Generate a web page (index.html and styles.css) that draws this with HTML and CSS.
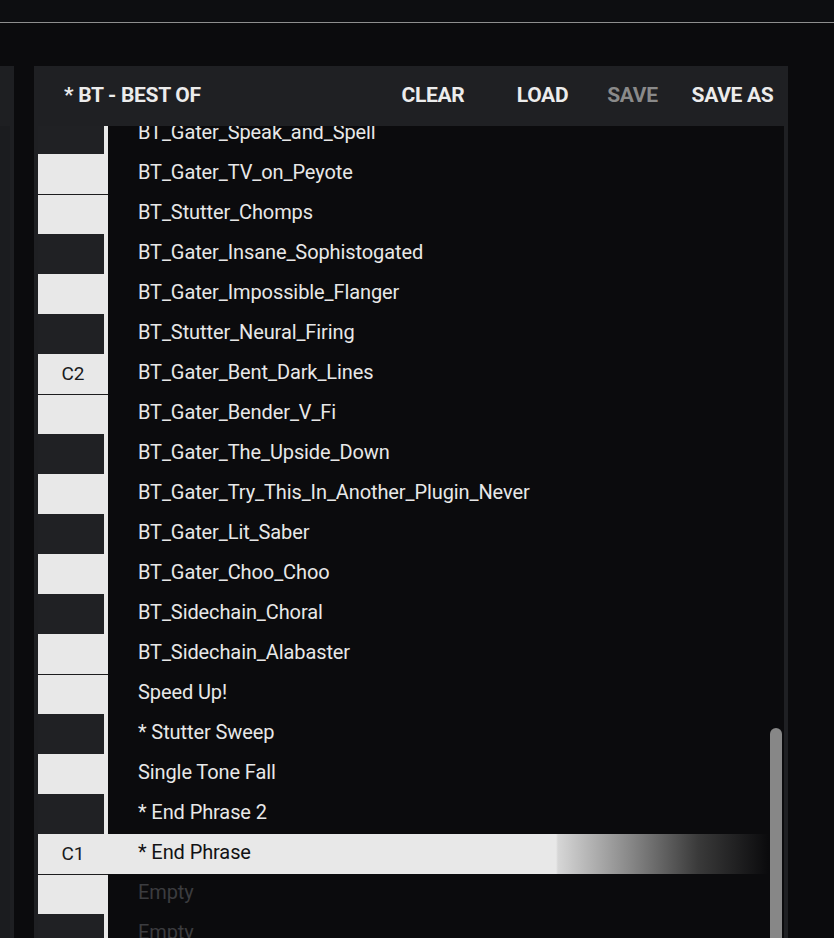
FILE: index.html
```html
<!DOCTYPE html>
<html>
<head>
<meta charset="utf-8">
<link rel="stylesheet" href="styles.css">
</head>
<body>
<div class="topbar"></div>
<div class="main">
  <div class="side"><div class="side-head"></div><div class="side-body"><div class="side-inner"></div></div></div>
  <div class="browser">
    <div class="head">
      <div class="title">* BT - BEST OF</div>
      <div class="actions">
        <div class="btn b-clear">CLEAR</div>
        <div class="btn b-load">LOAD</div>
        <div class="btn b-save off">SAVE</div>
        <div class="btn b-saveas">SAVE AS</div>
      </div>
    </div>
    <div class="listwrap">
      <div class="list">
        <div class="row"><div class="key"><div class="blk"></div></div><div class="name">BT_Gater_Speak_and_Spell</div></div>
        <div class="row"><div class="key"></div><div class="name">BT_Gater_TV_on_Peyote</div></div>
        <div class="row"><div class="key sep"></div><div class="name">BT_Stutter_Chomps</div></div>
        <div class="row"><div class="key"><div class="blk"></div></div><div class="name">BT_Gater_Insane_Sophistogated</div></div>
        <div class="row"><div class="key"></div><div class="name">BT_Gater_Impossible_Flanger</div></div>
        <div class="row"><div class="key"><div class="blk"></div></div><div class="name">BT_Stutter_Neural_Firing</div></div>
        <div class="row"><div class="key"><span class="lbl">C2</span></div><div class="name">BT_Gater_Bent_Dark_Lines</div></div>
        <div class="row"><div class="key sep"></div><div class="name">BT_Gater_Bender_V_Fi</div></div>
        <div class="row"><div class="key"><div class="blk"></div></div><div class="name">BT_Gater_The_Upside_Down</div></div>
        <div class="row"><div class="key"></div><div class="name">BT_Gater_Try_This_In_Another_Plugin_Never</div></div>
        <div class="row"><div class="key"><div class="blk"></div></div><div class="name">BT_Gater_Lit_Saber</div></div>
        <div class="row"><div class="key"></div><div class="name">BT_Gater_Choo_Choo</div></div>
        <div class="row"><div class="key"><div class="blk"></div></div><div class="name">BT_Sidechain_Choral</div></div>
        <div class="row"><div class="key"></div><div class="name">BT_Sidechain_Alabaster</div></div>
        <div class="row"><div class="key sep"></div><div class="name">Speed Up!</div></div>
        <div class="row"><div class="key"><div class="blk"></div></div><div class="name">* Stutter Sweep</div></div>
        <div class="row"><div class="key"></div><div class="name">Single Tone Fall</div></div>
        <div class="row"><div class="key"><div class="blk"></div></div><div class="name">* End Phrase 2</div></div>
        <div class="row selected"><div class="key"><span class="lbl">C1</span></div><div class="name">* End Phrase</div></div>
        <div class="row"><div class="key sep"></div><div class="name empty">Empty</div></div>
        <div class="row"><div class="key"><div class="blk"></div></div><div class="name empty">Empty</div></div>
      </div>
      <div class="scroll"></div>
    </div>
  </div>
</div>
</body>
</html>
```
FILE: styles.css
```css
html, body {
  margin: 0;
  padding: 0;
  height: 938px;
  overflow: hidden;
  background: #0b0b0d;
  font-family: Roboto, "Liberation Sans", sans-serif;
}

.topbar {
  height: 22px;
  background: #0d0e11;
  border-bottom: 1px solid #8e8e8e;
}

.main {
  margin-top: 43px;
  display: flex;
  gap: 20px;
  height: 872px;
}

.side {
  width: 14px;
  display: flex;
  flex-direction: column;
}
.side-head {
  height: 60px;
  background: #1e1f22;
}
.side-body {
  flex: 1;
  background: #1e1f22;
  display: flex;
}
.side-inner {
  width: 10px;
  background: #1b1c1f;
}

.browser {
  width: 754px;
  display: flex;
  flex-direction: column;
  background: #1f2023;
}

.head {
  height: 60px;
  display: flex;
  align-items: center;
  padding: 0 0 2px 30px;
  box-sizing: border-box;
  color: #ececec;
  font-weight: 700;
  font-size: 21px;
  letter-spacing: -0.3px;
}
.title {
  white-space: nowrap;
}
.actions {
  display: flex;
  margin-left: auto;
}
.btn {
  text-align: center;
  white-space: nowrap;
}
.b-clear { width: 74px; }
.b-load { width: 75px; margin-left: 35px; }
.b-save { width: 75px; margin-left: 15px; }
.b-saveas { width: 85px; margin-left: 20px; margin-right: 13px; }
.off { color: #8a8a8a; }

.listwrap {
  flex: 1;
  margin: 0 4px;
  background: #0b0b0d;
  position: relative;
  overflow: hidden;
}
.list {
  margin-top: -12px;
}
.row {
  height: 40px;
  display: flex;
  align-items: center;
  color: #e8e8e8;
  font-size: 20px;
  letter-spacing: -0.1px;
}
.key {
  width: 70px;
  height: 40px;
  flex: none;
  background: #e8e8e8;
  box-sizing: border-box;
  display: flex;
  align-items: center;
  justify-content: center;
  color: #1a1a1c;
  font-size: 19px;
  letter-spacing: 0;
}
.lbl {
  padding-bottom: 2px;
}
.key.sep {
  border-top: 1px solid #1c1c1e;
}
.blk {
  width: 66px;
  height: 40px;
  background: #202124;
  margin-right: 4px;
}
.name {
  padding-left: 30px;
  padding-bottom: 4px;
  white-space: nowrap;
}
.name.empty {
  color: #3b3c3f;
}
.row.selected {
  background: linear-gradient(90deg, #e8e8e8 518px, #d6d6d6 520px, #8a8a8a 590px, #3a3a3a 660px, #0b0b0d 730px);
  color: #121214;
}
.scroll {
  position: absolute;
  left: 732px;
  top: 602px;
  width: 12px;
  height: 320px;
  border-radius: 6px;
  background: #878787;
}
```
